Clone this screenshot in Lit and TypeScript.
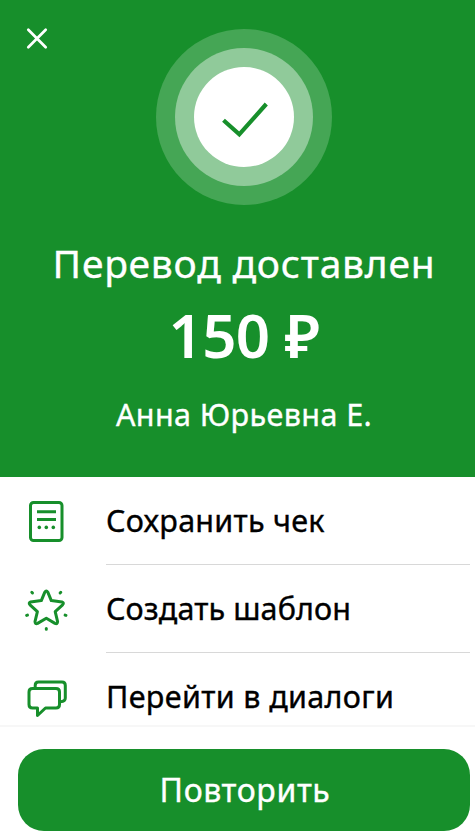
import { LitElement, html, css, svg } from "lit";
import { customElement } from "lit/decorators.js";

const receipt = svg`<rect x="6.5" y="4.5" width="31.5" height="38" rx="3"/><path d="M13 13.7h19M13 21.5h19"/><g class="dots"><circle cx="15.3" cy="29.4" r="1.8"/><circle cx="22.3" cy="29.4" r="1.8"/><circle cx="29.3" cy="29.4" r="1.8"/></g>`;
const star = svg`<path d="M20.8 6.2Q22.3 3.6 23.8 6.2L27.3 14.6L38 16Q40.4 16.8 38.6 18.8L31.2 25.6L33.6 35.6Q33.6 38.4 31 37.4L22.3 32.3L13.6 37.4Q11 38.4 11 35.6L13.4 25.6L6 18.8Q4.2 16.8 6.6 16L17.3 14.6Z"/><path class="rays" d="M7.8 6.3l.7.7M36.8 6.3l-.7.7M2.6 29.4l.9-.3M42 29.4l-.9-.3M22.3 42.5v.7"/>`;
const chat = svg`<path d="M11.2 14V11.5Q11.2 8 14.5 8H38Q41.3 8 41.3 11.5V24Q41.3 27.5 36.5 27.8"/><path d="M8.5 14.5H32Q35.5 14.5 35.5 18V30.5Q35.5 34 32 34H21.5L13.5 41.5V34H8.5Q5 34 5 30.5V18Q5 14.5 8.5 14.5Z"/>`;

@customElement("app-root")
export class AppRoot extends LitElement {
  static styles = css`
    :host { display: flex; flex-direction: column; height: 840px; background: #fff; overflow: hidden; font-family: "Noto Sans", "Open Sans", sans-serif; color: #000; }
    * { box-sizing: border-box; }
    header { height: 477px; flex: none; background: #178f2b; color: #fff; display: flex; flex-direction: column; align-items: center; position: relative; padding: 28.7px 0 0 13px; }
    .close { position: absolute; left: 25px; top: 26px; width: 24px; height: 24px; padding: 0; border: 0; background: none; }
    svg { display: block; fill: none; }
    .status { width: 176px; height: 176px; flex: none; }
    h1, .amount, .name { margin: 0; white-space: nowrap; }
    h1, .name, .label, .again { -webkit-text-stroke: 0.35px currentColor; }
    h1 { font-size: 39px; font-weight: 400; line-height: 54px; margin-top: 31px; letter-spacing: 0.75px; }
    .amount { font-size: 60px; font-weight: 600; line-height: 80px; margin-top: 5px; letter-spacing: -0.6px; }
    .name { font-size: 30.5px; line-height: 42px; margin-top: 18px; letter-spacing: 0.4px; }
    .list { height: 250px; flex: none; border-bottom: 2px solid #f7f7f7; margin: 0; padding: 0; list-style: none; }
    .row { display: flex; height: 88px; padding: 0 5px 0 24px; }
    .icon { width: 45px; height: 45px; margin: 21px 37px 0 0; flex: none; overflow: visible; stroke: #178f2b; stroke-width: 3; stroke-linejoin: round; stroke-linecap: butt; }
    .dots { fill: #178f2b; stroke: none; }
    .rays { stroke-linecap: round; }
    .label { flex: 1; white-space: nowrap; font-size: 30.5px; line-height: 42px; padding-top: 22px; border-bottom: 1.5px solid #d8d8d8; letter-spacing: 0.1px; }
    .row:first-child .label { letter-spacing: 0.25px; }
    .row:last-child .label { border: 0; letter-spacing: 0.35px; }
    .again { width: 452px; height: 82px; margin: 22px 0 0 18px; border: 0; border-radius: 26px; background: #178f2b; color: #fff; font: 400 32px/44px "Noto Sans", "Open Sans", sans-serif; letter-spacing: 0.6px; padding: 0 0 0 2px; flex: none; }
  `;

  render() {
    const rows = [
      { icon: receipt, label: "Сохранить чек" },
      { icon: star, label: "Создать шаблон" },
      { icon: chat, label: "Перейти в диалоги" },
    ];
    return html`
      <header>
        <button class="close" aria-label="Закрыть">
          <svg width="24" height="24" stroke="#fff" stroke-width="2.7" stroke-linecap="round"><path d="M3.3 3.8L20.7 21.2M20.7 3.8L3.3 21.2"/></svg>
        </button>
        <svg class="status" viewBox="0 0 176 176">
          <circle cx="88" cy="88" r="88" fill="#45a655"/>
          <circle cx="88" cy="88" r="69" fill="#90ca9a"/>
          <circle cx="88" cy="88" r="50" fill="#fff"/>
          <path d="M67.5 91.2L83.3 105.3L110.3 75" stroke="#178f2b" stroke-width="4.2"/>
        </svg>
        <h1>Перевод доставлен</h1>
        <div class="amount">150 ₽</div>
        <div class="name">Анна Юрьевна Е.</div>
      </header>
      <ul class="list">
        ${rows.map((r) => html`<li class="row"><svg class="icon" viewBox="0 0 45 45">${r.icon}</svg><span class="label">${r.label}</span></li>`)}
      </ul>
      <button class="again">Повторить</button>
    `;
  }
}
